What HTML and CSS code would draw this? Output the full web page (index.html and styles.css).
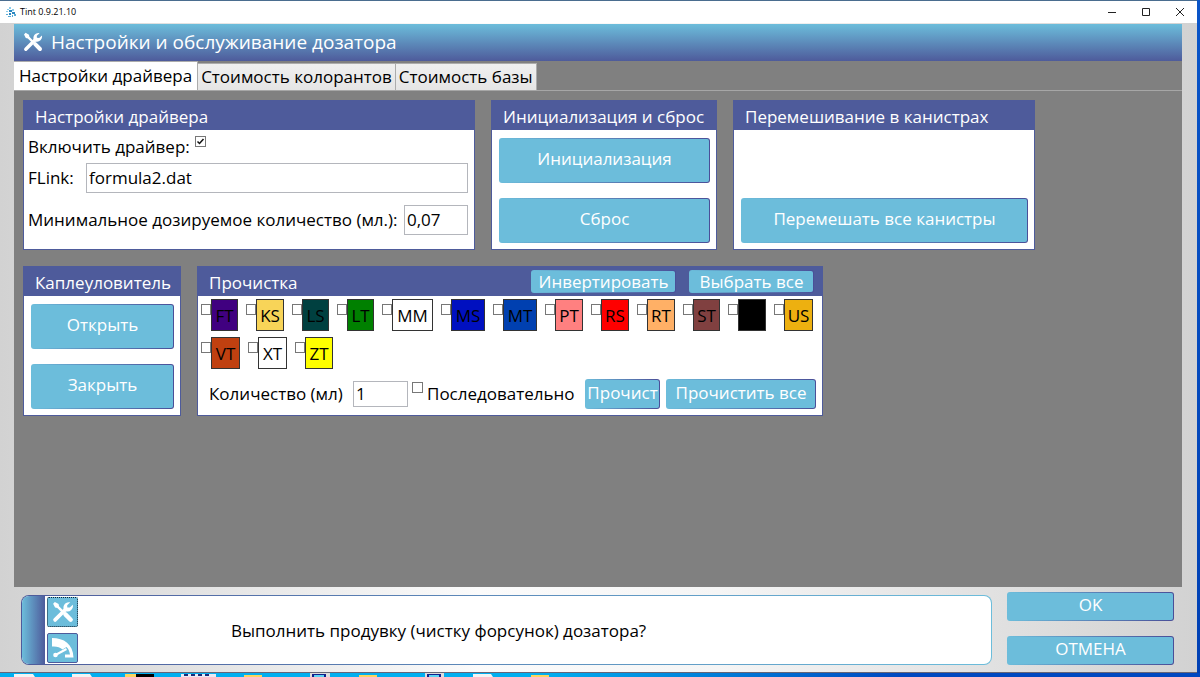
FILE: index.html
```html
<!DOCTYPE html>
<html lang="ru">
<head>
<meta charset="utf-8">
<title>Tint 0.9.21.10</title>
<link rel="stylesheet" href="styles.css">
</head>
<body>
<svg class="symbols" aria-hidden="true">
  <symbol id="tools" viewBox="0 0 20 20">
    <path d="M1 2.4 2.6.8 6 2.8 6.4 4.8 11 9.4 9.4 11 4.8 6.4 2.8 6Z" fill="currentColor"/>
    <path d="M12.2 12.2 17 17" fill="none" stroke="currentColor" stroke-width="4" stroke-linecap="round"/>
    <path d="M2.8 17.2 12.5 7.5" fill="none" stroke="currentColor" stroke-width="3.4" stroke-linecap="round"/>
    <path d="M16.6 1.2A5 5 0 0 0 10.6 7.4L12.6 9.4A5 5 0 0 0 18.9 3.4L16.2 6 13.9 5.8 13.8 3.8Z" fill="currentColor"/>
  </symbol>
</svg>
<div class="window">
  <header class="titlebar">
    <svg class="app-icon" viewBox="0 0 10 11" aria-hidden="true">
      <path d="M3 0h2v2H3zM1 2h2v1H1zM6 2h2v2H6zM0 4h2v1H0zM3 4h2v1H3z" fill="#8ccbe8"/>
      <path d="M3 3h3v2H3zM6 5h3v2H6zM3 6h2v2H3z" fill="#2a86c0"/>
      <path d="M0 7h2v1H0zM2 9h3v1H2zM6 8h1v2H6zM8 7h2v2H8z" fill="#58a9d4"/>
    </svg>
    <span class="app-name">Tint 0.9.21.10</span>
    <button class="caption" aria-label="Свернуть"><svg viewBox="0 0 10 10"><path d="M1 5.5h8"/></svg></button>
    <button class="caption" aria-label="Развернуть"><svg viewBox="0 0 10 10"><path d="M1.5 1.5h7v7h-7z"/></svg></button>
    <button class="caption" aria-label="Закрыть окно"><svg viewBox="0 0 10 10"><path d="m1 1 8 8M9 1 1 9"/></svg></button>
  </header>

  <main class="workspace">
    <h1 class="heading"><svg class="heading-icon" aria-hidden="true"><use href="#tools"/></svg>Настройки и обслуживание дозатора</h1>
    <div class="tabs" role="tablist">
      <button class="tab active" role="tab" aria-selected="true">Настройки драйвера</button>
      <button class="tab" role="tab" aria-selected="false">Стоимость колорантов</button>
      <button class="tab" role="tab" aria-selected="false">Стоимость базы</button>
    </div>
    <div class="panels" role="tabpanel">
      <section class="panel driver">
        <h2 class="panel-title">Настройки драйвера</h2>
        <div class="driver-body">
          <div class="enable"><label for="enable">Включить драйвер:</label><input class="check" type="checkbox" id="enable" checked></div>
          <div class="field"><label for="flink">FLink:</label><input class="text flink" id="flink" value="formula2.dat"></div>
          <div class="field"><label for="min">Минимальное дозируемое количество (мл.):</label><input class="text min" id="min" value="0,07"></div>
        </div>
      </section>

      <section class="panel init">
        <h2 class="panel-title">Инициализация и сброс</h2>
        <div class="stack">
          <button class="btn tall">Инициализация</button>
          <button class="btn tall">Сброс</button>
        </div>
      </section>

      <section class="panel mixing">
        <h2 class="panel-title">Перемешивание в канистрах</h2>
        <div class="stack"><button class="btn tall">Перемешать все канистры</button></div>
      </section>

      <section class="panel catcher">
        <h2 class="panel-title">Каплеуловитель</h2>
        <div class="stack">
          <button class="btn tall">Открыть</button>
          <button class="btn tall">Закрыть</button>
        </div>
      </section>

      <section class="panel purge">
        <div class="panel-title">
          <h2 class="purge-name">Прочистка</h2>
          <button class="btn small invert">Инвертировать</button>
          <button class="btn small select">Выбрать все</button>
        </div>
        <div class="colorants">
          <label class="colorant"><input class="check" type="checkbox"><span class="swatch narrow ft">FT</span></label>
          <label class="colorant"><input class="check" type="checkbox"><span class="swatch ks">KS</span></label>
          <label class="colorant"><input class="check" type="checkbox"><span class="swatch narrow ls">LS</span></label>
          <label class="colorant"><input class="check" type="checkbox"><span class="swatch narrow lt">LT</span></label>
          <label class="colorant"><input class="check" type="checkbox"><span class="swatch widest">MM</span></label>
          <label class="colorant"><input class="check" type="checkbox"><span class="swatch wide ms">MS</span></label>
          <label class="colorant"><input class="check" type="checkbox"><span class="swatch wide mt">MT</span></label>
          <label class="colorant"><input class="check" type="checkbox"><span class="swatch pt">PT</span></label>
          <label class="colorant"><input class="check" type="checkbox"><span class="swatch rs">RS</span></label>
          <label class="colorant"><input class="check" type="checkbox"><span class="swatch rt">RT</span></label>
          <label class="colorant"><input class="check" type="checkbox"><span class="swatch narrow st">ST</span></label>
          <label class="colorant"><input class="check" type="checkbox" aria-label="Чёрный"><span class="swatch black"></span></label>
          <label class="colorant"><input class="check" type="checkbox"><span class="swatch broad us">US</span></label>
          <label class="colorant"><input class="check" type="checkbox"><span class="swatch broad vt">VT</span></label>
          <label class="colorant"><input class="check" type="checkbox"><span class="swatch broad">XT</span></label>
          <label class="colorant"><input class="check" type="checkbox"><span class="swatch zt">ZT</span></label>
        </div>
        <div class="purge-actions">
          <label class="amount-label" for="amount">Количество (мл)</label>
          <input class="text amount" id="amount" value="1">
          <label class="sequence"><input class="check" type="checkbox">Последовательно</label>
          <button class="btn medium clipped">Прочист</button>
          <button class="btn medium all">Прочистить все</button>
        </div>
      </section>
    </div>
  </main>

  <footer class="footer">
    <div class="message">
      <div class="message-tools">
        <button class="icon-btn focused" aria-label="Настройки"><svg viewBox="0 0 20 20"><use href="#tools"/></svg></button>
        <button class="icon-btn" aria-label="Дозатор">
          <svg viewBox="0 0 22 20">
            <path d="M0 0C12 0 21 6 21.500 19.500H13V16.500H18C17.500 13 16.500 11 14.500 9L10.500 11.500C8 9 4 8 0 8.500Z" fill="currentColor"/>
            <path d="M3.500 17 14.500 11" fill="none" stroke="currentColor" stroke-width="2"/>
            <circle cx="3.500" cy="17" r="2.300" fill="currentColor"/>
          </svg>
        </button>
      </div>
      <p class="message-text">Выполнить продувку (чистку форсунок) дозатора?</p>
    </div>
    <div class="confirm">
      <button class="btn dialog">OK</button>
      <button class="btn dialog">ОТМЕНА</button>
    </div>
  </footer>
</div>
<div class="desktop">
  <svg width="560" height="4" viewBox="0 0 560 4" aria-hidden="true">
    <path d="M14 1h19l2 3H14zM72 1h18l2 3H72zM473 1h18l2 3h-20z" fill="#f4f4f4"/>
    <path d="M125 1h11v3h-11zM244 2h18v2h-18zM359 2h18v2h-18zM531 2h18v2h-18z" fill="#fbd560"/>
    <path d="M136 1h18v3h-18z" fill="#000"/>
    <path d="M181 1h35v3h-35z" fill="#e8eaf4"/>
    <path d="M184 2h28" stroke="#1b2a78" stroke-width="2" stroke-dasharray="4 3"/>
    <path d="M310 0h20v4h-20zM425 0h19v4h-19z" fill="#ddd"/>
    <path d="M312 1h14v3h-14zM427 1h14v3h-14z" fill="#10208c"/>
    <path d="M314 2h10v2h-10zM429 2h10v2h-10z" fill="#5bd3f4"/>
  </svg>
</div>
</body>
</html>
```
FILE: styles.css
```css
* { box-sizing: border-box; }

:root {
  --cyan: #6cbddb;
  --indigo: #4e5b9b;
}

body {
  margin: 0;
  min-height: 100vh;
  display: flex;
  flex-direction: column;
  background: linear-gradient(#0a55c8, #0040b4);
  font: 17px/24px "Open Sans", "Noto Sans", sans-serif;
  color: #000;
}

button, input { font: inherit; color: inherit; }
button { padding: 0; border: 0; background: none; }
h1, h2, p { margin: 0; font: inherit; }

.symbols { display: none; }

.window {
  flex: 1;
  display: flex;
  flex-direction: column;
  margin-right: 3px;
  border-top: 1px solid #4a6d8f;
  border-bottom: 1px solid #667;
  background: linear-gradient(90deg, #d2d2d2, #fbfbfb 40%, #f5f5f5 60%, #d2d2d2);
}

.titlebar {
  display: flex;
  align-items: center;
  height: 22px;
  padding-left: 6px;
  background: #fff;
  font-size: 9px;
  line-height: 20px;
}
.app-icon { width: 10px; height: 11px; margin-right: 4px; }
.app-name { flex: 1; }
.caption { width: 34px; height: 22px; display: grid; place-items: center; }
.caption svg { width: 10px; height: 10px; fill: none; stroke: #222; }

.workspace {
  flex: 1;
  display: flex;
  flex-direction: column;
  margin: 1px 15px 0 14px;
  background: #808080;
}

.heading {
  display: flex;
  align-items: center;
  gap: 8px;
  height: 37px;
  padding: 0 9px 2px;
  background: linear-gradient(var(--cyan), var(--indigo));
  color: #fff;
  font-size: 19px;
  white-space: nowrap;
}
.heading-icon { width: 20px; height: 20px; }

.tabs {
  display: flex;
  align-items: flex-end;
  height: 30px;
  border-bottom: 1px solid #a6a6a6;
}
.tab {
  height: 27px;
  padding: 0 3px;
  border: 1px solid #acacac;
  border-bottom: 0;
  border-left: 0;
  background: linear-gradient(#f0f0f0, #e5e5e5);
  white-space: nowrap;
}
.tab.active { height: 29px; padding: 0 5px; background: #fff; }

.panels {
  display: flex;
  flex-wrap: wrap;
  align-content: flex-start;
  gap: 16px;
  padding: 9px;
}
.panel {
  display: flex;
  flex-direction: column;
  min-height: 150px;
  border: 1px solid var(--indigo);
  background: #fff;
}
.driver { width: 452px; }
.init { width: 226px; }
.mixing { width: 302px; }
.catcher { width: 158px; }
.purge { width: 626px; }

.panel-title {
  display: flex;
  align-items: center;
  height: 29px;
  padding: 2px 8px 0 11px;
  background: var(--indigo);
  color: #fff;
  white-space: nowrap;
}

.btn {
  padding-bottom: 3px;
  border: 1px solid transparent;
  border-radius: 3px;
  background: linear-gradient(var(--cyan), var(--cyan)) padding-box,
              linear-gradient(90deg, var(--cyan), #4a4f98) border-box;
  color: #fff;
  white-space: nowrap;
  overflow: hidden;
}
.tall { height: 45px; }
.small { height: 23px; padding-bottom: 0; line-height: 20px; }
.medium { height: 30px; }
.dialog { height: 29px; }

.stack {
  flex: 1;
  display: flex;
  flex-direction: column;
  justify-content: flex-end;
  gap: 15px;
  padding: 8px 6px 6px 7px;
}

.driver-body { padding: 2px 6px 0 4px; }
.field { display: flex; align-items: center; justify-content: space-between; margin-bottom: 12px; white-space: nowrap; }
.enable { display: flex; align-items: flex-start; gap: 5px; height: 31px; padding-top: 4px; line-height: 22px; }
.text {
  height: 30px;
  padding: 0 2px 2px;
  border: 1px solid #b4b6bc;
  border-radius: 0;
  background: #fff;
}
.flink { width: 382px; }
.min { width: 64px; }

.check {
  appearance: none;
  flex: none;
  width: 11px;
  height: 11px;
  margin: 0;
  border: 1px solid #777;
  background: #fff;
}
.check:checked {
  background: url("data:image/svg+xml,%3Csvg xmlns='http://www.w3.org/2000/svg' viewBox='0 0 9 9'%3E%3Cpath d='M1.500 4.500 3.500 6.500 7.500 2' fill='none' stroke='%23111' stroke-width='1.500'/%3E%3C/svg%3E") center / 9px;
}

.purge .panel-title { padding-top: 0; }
.purge-name { flex: 1; padding-top: 2px; }
.invert { width: 145px; margin-right: 13px; }
.select { width: 125px; }

.colorants {
  display: flex;
  flex-wrap: wrap;
  gap: 6px 8px;
  padding: 3px 0 0 3px;
}
.colorant { display: flex; }
.colorant .check { margin: 5px 0 0; width: 10px; }
.swatch {
  display: flex;
  align-items: center;
  justify-content: center;
  width: 28px;
  height: 32px;
  padding-top: 2px;
  border: 1px solid #333;
}
.narrow { width: 27px; }
.broad { width: 29px; }
.wide { width: 34px; }
.widest { width: 41px; }
.ft { background: #400080; }
.ks { background: #f8d458; }
.ls { background: #004040; }
.lt { background: #008000; }
.ms { background: #0010c0; }
.mt { background: #0040b0; }
.pt { background: #ff8080; }
.rs { background: #ff0000; }
.rt { background: #ffb066; }
.st { background: #804040; }
.black { background: #000; }
.us { background: #edb010; }
.vt { background: #c04010; }
.zt { background: #ffff00; }

.purge-actions {
  display: flex;
  align-items: center;
  padding: 10px 6px 6px 11px;
  white-space: nowrap;
}
.amount-label { width: 144px; }
.amount { width: 55px; height: 26px; margin-right: 4px; }
.sequence { display: flex; flex: 1; gap: 4px; }
.clipped { width: 75px; margin-right: 6px; }
.all { width: 150px; }

.footer {
  display: flex;
  gap: 15px;
  padding: 5px 23px 7px 21px;
}
.message {
  flex: 1;
  display: flex;
  align-items: center;
  margin-top: 3px;
  border: 1px solid transparent;
  border-radius: 8px;
  background: linear-gradient(90deg, var(--cyan), var(--indigo)) 0 0 / 23px 100% no-repeat padding-box,
              linear-gradient(#fff, #fff) padding-box,
              linear-gradient(90deg, var(--indigo), var(--cyan)) border-box;
}
.message-tools { display: grid; gap: 6px; padding-left: 25px; }
.icon-btn {
  display: grid;
  place-items: center;
  width: 31px;
  height: 30px;
  border: 1px solid var(--indigo);
  border-radius: 2px;
  background: var(--cyan);
  color: #fff;
}
.icon-btn svg { width: 22px; height: 22px; }
.focused { border: 1px dotted #123; }
.message-text { padding: 2px 0 0 153px; }
.confirm { display: grid; gap: 15px; width: 167px; }

.desktop {
  height: 4px;
  overflow: hidden;
  background: linear-gradient(90deg, #00aff0 45%, #0048c0 75%);
}
.desktop svg { display: block; }
```
